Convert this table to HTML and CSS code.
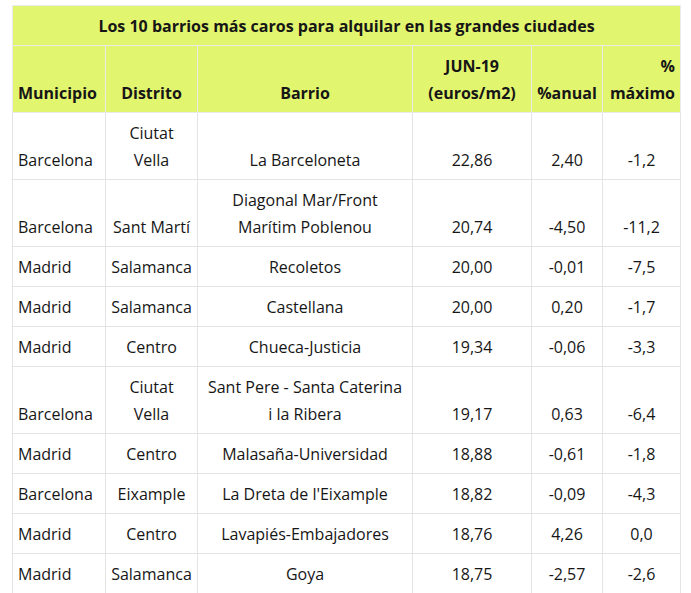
FILE: index.html
```html
<!DOCTYPE html>
<html lang="es">
<head>
<meta charset="utf-8">
<title>Los 10 barrios más caros</title>
<link rel="stylesheet" href="styles.css">
</head>
<body>
<table class="rent">
  <colgroup>
    <col class="c1"><col class="c2"><col class="c3"><col class="c4"><col class="c5"><col class="c6">
  </colgroup>
  <thead>
    <tr class="title-row"><th colspan="6" class="title">Los 10 barrios más caros para alquilar en las grandes ciudades</th></tr>
    <tr class="head-row">
      <th class="left">Municipio</th>
      <th>Distrito</th>
      <th>Barrio</th>
      <th>JUN-19<br>(euros/m2)</th>
      <th>%anual</th>
      <th class="right">%<br>máximo</th>
    </tr>
  </thead>
  <tbody>
    <tr><td class="left">Barcelona</td><td>Ciutat<br>Vella</td><td>La Barceloneta</td><td>22,86</td><td>2,40</td><td>-1,2</td></tr>
    <tr><td class="left">Barcelona</td><td>Sant Martí</td><td>Diagonal Mar/Front<br>Marítim Poblenou</td><td>20,74</td><td>-4,50</td><td>-11,2</td></tr>
    <tr><td class="left">Madrid</td><td>Salamanca</td><td>Recoletos</td><td>20,00</td><td>-0,01</td><td>-7,5</td></tr>
    <tr><td class="left">Madrid</td><td>Salamanca</td><td>Castellana</td><td>20,00</td><td>0,20</td><td>-1,7</td></tr>
    <tr><td class="left">Madrid</td><td>Centro</td><td>Chueca-Justicia</td><td>19,34</td><td>-0,06</td><td>-3,3</td></tr>
    <tr><td class="left">Barcelona</td><td>Ciutat<br>Vella</td><td>Sant Pere - Santa Caterina<br>i la Ribera</td><td>19,17</td><td>0,63</td><td>-6,4</td></tr>
    <tr><td class="left">Madrid</td><td>Centro</td><td>Malasaña-Universidad</td><td>18,88</td><td>-0,61</td><td>-1,8</td></tr>
    <tr><td class="left">Barcelona</td><td>Eixample</td><td>La Dreta de l'Eixample</td><td>18,82</td><td>-0,09</td><td>-4,3</td></tr>
    <tr><td class="left">Madrid</td><td>Centro</td><td>Lavapiés-Embajadores</td><td>18,76</td><td>4,26</td><td>0,0</td></tr>
    <tr><td class="left">Madrid</td><td>Salamanca</td><td>Goya</td><td>18,75</td><td>-2,57</td><td>-2,6</td></tr>
  </tbody>
</table>
</body>
</html>
```

FILE: styles.css
```css
html, body {
  margin: 0;
  padding: 0;
  background: #ffffff;
}
body {
  padding: 5px 0 0 12px;
  font-family: "Open Sans", "Noto Sans", sans-serif;
  font-size: 16px;
  color: #161616;
}
.rent {
  width: 668px;
  table-layout: fixed;
  border-collapse: collapse;
  border: 1px solid #e4e4e4;
}
.c1 { width: 93px; }
.c2 { width: 92px; }
.c3 { width: 215px; }
.c4 { width: 119px; }
.c5 { width: 71px; }
.c6 { width: 78px; }

.rent th, .rent td {
  border: 1px solid #e4e4e4;
  padding: 7px 5px 5px;
  line-height: 27px;
  vertical-align: bottom;
  text-align: center;
  white-space: nowrap;
}
.rent th {
  background: #e2f56f;
  font-weight: 700;
}
.rent .left { text-align: left; }
.rent .right { text-align: right; }
.rent th.title {
  text-align: center;
  vertical-align: middle;
}
.rent thead th {
  border-color: #eaeaea;
}
```
